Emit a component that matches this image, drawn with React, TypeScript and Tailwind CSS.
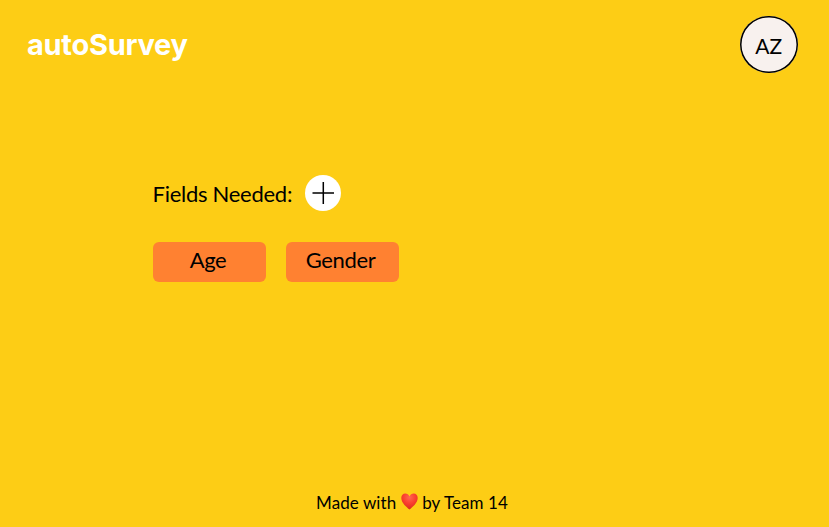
export default function App() {
  return (
    <div className="flex h-[527px] w-full flex-col bg-[#fdcd15] text-black [font-family:Lato,sans-serif]">
      <header className="flex h-[88px] items-center justify-between pl-[27px] pr-[31.5px] pt-px">
        <h1 className="text-[29px] font-bold leading-none tracking-[-0.27px] text-white [font-family:Inter,sans-serif]">autoSurvey</h1>
        <div className="flex size-[57.5px] items-center justify-center rounded-full bg-[#f8f1ee] pt-[3px] text-[21px] [box-shadow:inset_0_0_0_1.5px_#000]">AZ</div>
      </header>
      <main className="flex-1 pl-[152.5px] pt-[87px]">
        <div className="flex h-9 items-center">
          <span className="w-[152.5px] whitespace-nowrap pt-px text-[22px] tracking-[-0.27px]">Fields Needed:</span>
          <button className="flex size-9 items-center justify-center rounded-full bg-white" aria-label="Add field">
            <svg width="22" height="22" viewBox="0 0 22 22" stroke="black" strokeWidth="1.5"><path d="M11.300 0v22M.5 11H22" /></svg>
          </button>
        </div>
        <div className="mt-[31px] flex gap-5">
          <div className="flex h-10 w-[113px] items-center justify-center rounded-md bg-[#ff8131] pb-[5px] pr-0.5 text-[22px] tracking-[-0.4px]">Age</div>
          <div className="flex h-10 w-[113px] items-center justify-center rounded-md bg-[#ff8131] pb-[5px] pr-[3px] text-[22px] tracking-[-0.35px]">Gender</div>
        </div>
      </main>
      <footer className="flex h-[50px] items-center justify-center gap-[4.500px] pr-[5px] text-[17px]">
        <span className="pt-px tracking-[0.08px]">Made with</span>
        <svg className="mb-px" width="17" height="17" viewBox="0 0 17 17">
          <defs>
            <radialGradient id="heart" cx="50%" cy="25%" r="75%">
              <stop offset="0" stopColor="#ff6650" />
              <stop offset="0.5" stopColor="#fb402f" />
              <stop offset="1" stopColor="#d82c1c" />
            </radialGradient>
          </defs>
          <path d="M8.500 16.500C6 14.500.3 10 .3 5 .3 2 2.100.5 4.200.5c2 0 3.600 1.200 4.300 3.100C9.200 1.700 10.800.5 12.800.5c2.100 0 3.900 1.500 3.900 4.500 0 5-5.700 9.500-8.200 11.500z" fill="url(#heart)" />
        </svg>
        <span className="pt-px tracking-[0.08px]">by Team 14</span>
      </footer>
    </div>
  );
}
